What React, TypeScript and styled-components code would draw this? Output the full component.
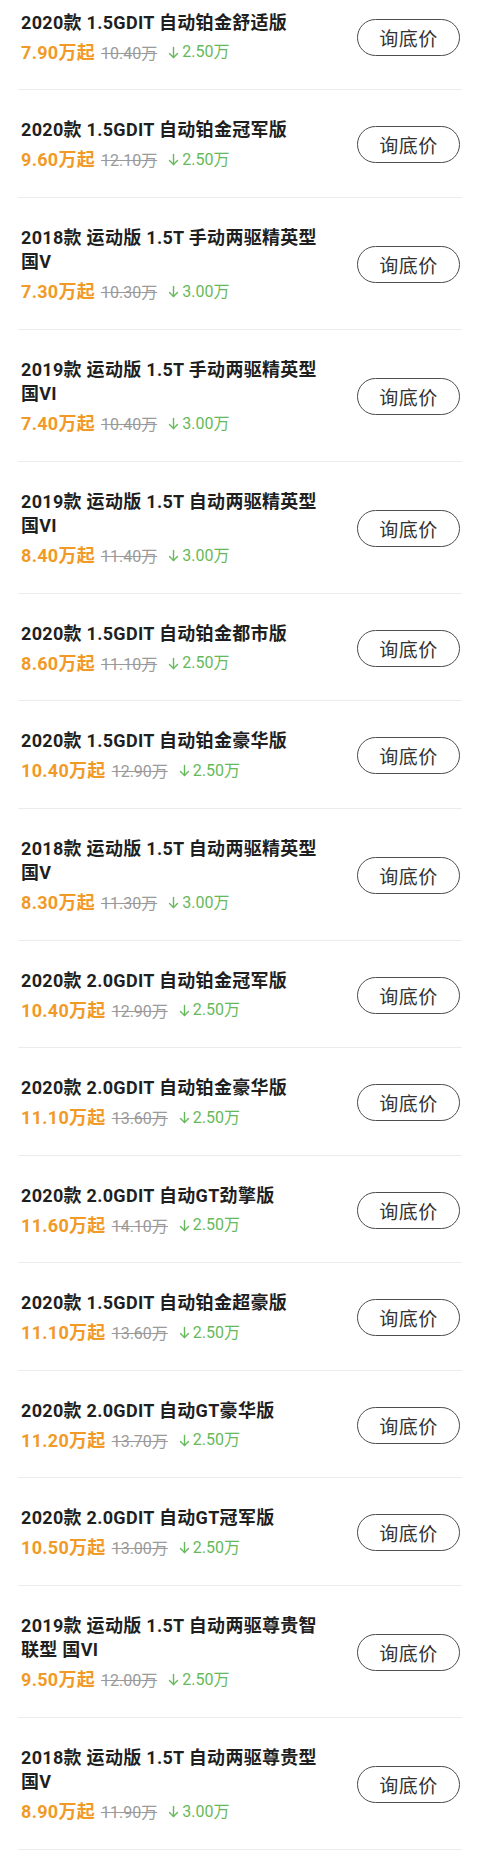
import React from "react";
import styled, { createGlobalStyle } from "styled-components";

const GlobalStyle = createGlobalStyle`
  html, body {
    margin: 0;
    padding: 0;
    background: #ffffff;
  }
  body {
    font-family: Roboto, "Noto Sans CJK SC", sans-serif;
    -webkit-font-smoothing: antialiased;
  }
`;

type Trim = {
  title: string;
  price: string;
  guide: string;
  drop: string;
};

const trims: Trim[] = [
  { title: "2020款 1.5GDIT 自动铂金舒适版", price: "7.90", guide: "10.40", drop: "2.50" },
  { title: "2020款 1.5GDIT 自动铂金冠军版", price: "9.60", guide: "12.10", drop: "2.50" },
  { title: "2018款 运动版 1.5T 手动两驱精英型 国V", price: "7.30", guide: "10.30", drop: "3.00" },
  { title: "2019款 运动版 1.5T 手动两驱精英型 国VI", price: "7.40", guide: "10.40", drop: "3.00" },
  { title: "2019款 运动版 1.5T 自动两驱精英型 国VI", price: "8.40", guide: "11.40", drop: "3.00" },
  { title: "2020款 1.5GDIT 自动铂金都市版", price: "8.60", guide: "11.10", drop: "2.50" },
  { title: "2020款 1.5GDIT 自动铂金豪华版", price: "10.40", guide: "12.90", drop: "2.50" },
  { title: "2018款 运动版 1.5T 自动两驱精英型 国V", price: "8.30", guide: "11.30", drop: "3.00" },
  { title: "2020款 2.0GDIT 自动铂金冠军版", price: "10.40", guide: "12.90", drop: "2.50" },
  { title: "2020款 2.0GDIT 自动铂金豪华版", price: "11.10", guide: "13.60", drop: "2.50" },
  { title: "2020款 2.0GDIT 自动GT劲擎版", price: "11.60", guide: "14.10", drop: "2.50" },
  { title: "2020款 1.5GDIT 自动铂金超豪版", price: "11.10", guide: "13.60", drop: "2.50" },
  { title: "2020款 2.0GDIT 自动GT豪华版", price: "11.20", guide: "13.70", drop: "2.50" },
  { title: "2020款 2.0GDIT 自动GT冠军版", price: "10.50", guide: "13.00", drop: "2.50" },
  { title: "2019款 运动版 1.5T 自动两驱尊贵智联型 国VI", price: "9.50", guide: "12.00", drop: "2.50" },
  { title: "2018款 运动版 1.5T 自动两驱尊贵型 国V", price: "8.90", guide: "11.90", drop: "3.00" },
];

const List = styled.ul`
  list-style: none;
  margin: -17.5px 0 0 0;
  padding: 0 18px;
`;

const Row = styled.li`
  display: flex;
  align-items: center;
  justify-content: space-between;
  padding: 28px 2px 25px 3px;
  border-bottom: 1px solid #ececec;
`;

const Info = styled.div`
  display: flex;
  flex-direction: column;
  gap: 5px;
  width: 305px;
`;

const Title = styled.div`
  font-size: 18px;
  line-height: 24.5px;
  font-weight: 700;
  letter-spacing: 0.3px;
  color: #1f1f1f;
`;

const PriceLine = styled.div`
  display: flex;
  align-items: baseline;
  height: 24px;
  line-height: 24px;
  white-space: nowrap;
`;

const Price = styled.span`
  font-size: 18px;
  font-weight: 700;
  letter-spacing: 0.3px;
  color: #f19a27;
`;

const Guide = styled.span`
  margin-left: 6px;
  font-size: 16px;
  color: #9a9a9a;
  text-decoration: line-through;
`;

const Drop = styled.span`
  display: inline-flex;
  align-items: center;
  margin-left: 11px;
  font-size: 16px;
  color: #66b95a;
  gap: 3px;
`;

const Arrow = styled.svg`
  width: 11px;
  height: 13px;
  align-self: center;
`;

const AskButton = styled.button`
  flex: none;
  width: 103px;
  height: 37px;
  border: 1px solid #4d4d4d;
  border-radius: 19px;
  background: #fff;
  color: #333;
  font-family: "Noto Sans CJK SC", sans-serif;
  font-size: 19px;
  line-height: 35px;
  padding: 0;
  letter-spacing: 0.5px;
`;

const DownArrow = () => (
  <Arrow viewBox="0 0 11 13" fill="none" stroke="#66b95a" strokeWidth="1.4" strokeLinecap="round" strokeLinejoin="round">
    <path d="M5.5 1.5 V11.5" />
    <path d="M1.5 7.5 L5.5 11.5 L9.5 7.5" />
  </Arrow>
);

export default function App() {
  return (
    <>
      <GlobalStyle />
      <List>
        {trims.map((t, i) => (
          <Row key={i}>
            <Info>
              <Title>{t.title}</Title>
              <PriceLine>
                <Price>{t.price}万起</Price>
                <Guide>{t.guide}万</Guide>
                <Drop>
                  <DownArrow />
                  {t.drop}万
                </Drop>
              </PriceLine>
            </Info>
            <AskButton>询底价</AskButton>
          </Row>
        ))}
      </List>
    </>
  );
}
